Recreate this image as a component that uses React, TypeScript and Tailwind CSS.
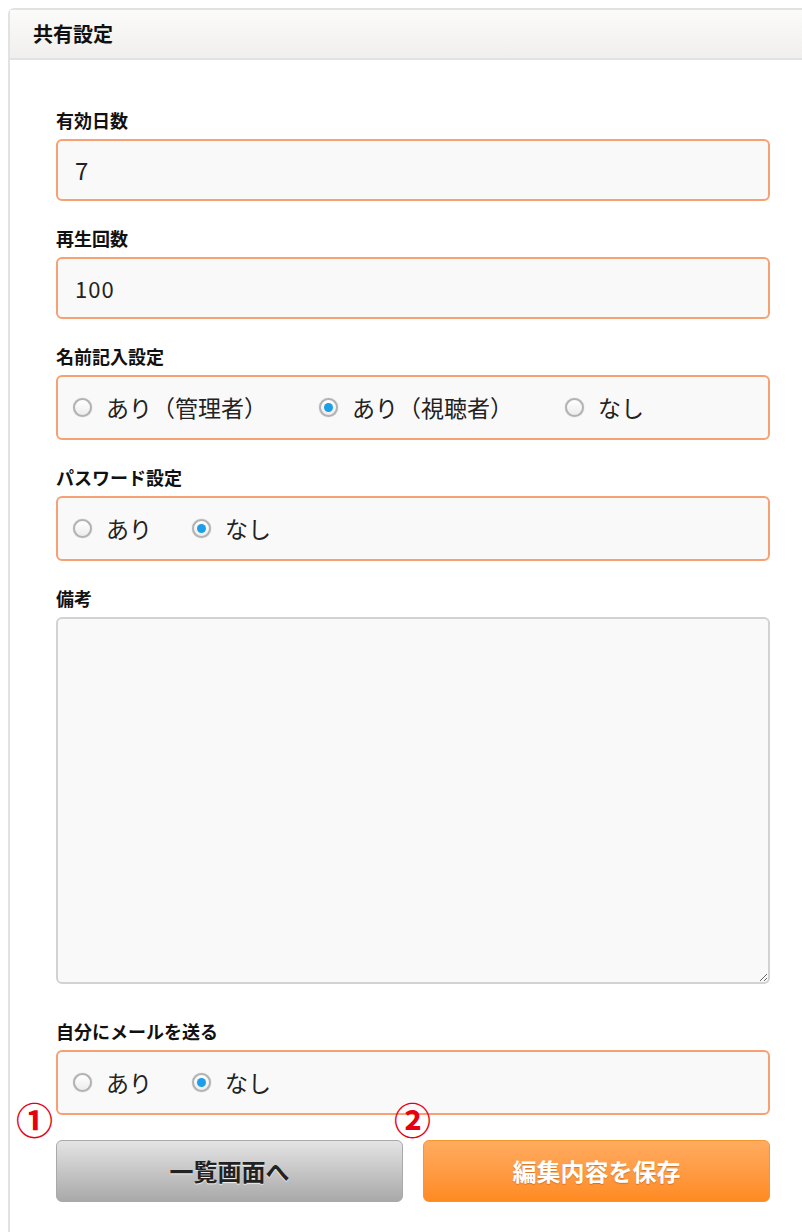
import React from "react";

function Radio({ checked }: { checked?: boolean }) {
  return (
    <span className="relative inline-flex w-[19px] h-[19px] min-w-[19px] shrink-0 items-center justify-center rounded-full border-2 border-[#b2b2b2] bg-gradient-to-b from-[#ffffff] to-[#ececec] shadow-[0_0_1px_rgba(0,0,0,0.35)]">
      {checked && <span className="w-[9px] h-[9px] rounded-full bg-[#1d9ee9]" />}
    </span>
  );
}

function Option({ label, checked, className }: { label: string; checked?: boolean; className?: string }) {
  return (
    <span className={"inline-flex items-center gap-[14px] " + (className ?? "")}>
      <Radio checked={checked} />
      <span className="text-[23px] text-[#222]">{label}</span>
    </span>
  );
}

function Label({ children }: { children: React.ReactNode }) {
  return <div className="h-[24px] leading-[24px] mb-[7px] text-[18px] font-bold text-[#111]">{children}</div>;
}

const boxCls =
  "w-[714px] border-2 border-[#f7a072] rounded-[6px] bg-[#f9f9f9] flex items-center";

export default function App() {
  return (
    <div className="relative w-[802px] h-[1232px] overflow-hidden bg-white font-['Noto_Sans_CJK_JP','Noto_Sans',sans-serif]">
      <div className="ml-[8px] mt-[8px] h-[1224px] border-l-2 border-t-2 border-[#e2e2e2] rounded-tl-[6px]">
        <div className="h-[50px] flex items-center pl-[23px] bg-gradient-to-b from-[#fbfbfa] to-[#f0efee] border-b-2 border-[#e2e2e2]">
          <span className="text-[20px] font-bold text-[#111]">共有設定</span>
        </div>
        <div className="pl-[46px] pt-[48px] flex flex-col">
          <div>
            <Label>有効日数</Label>
            <div className={boxCls + " h-[62px] pl-[17px]"}>
              <span className="text-[24px] text-[#222]">7</span>
            </div>
          </div>
          <div className="mt-[25px]">
            <Label>再生回数</Label>
            <div className={boxCls + " h-[62px] pl-[17px]"}>
              <span className="text-[22px] text-[#222] tracking-[1px]">100</span>
            </div>
          </div>
          <div className="mt-[25px]">
            <Label>名前記入設定</Label>
            <div className={boxCls + " h-[65px] pl-[15px]"}>
              <Option label="あり（管理者）" className="mr-[52px]" />
              <Option label="あり（視聴者）" checked className="mr-[52px]" />
              <Option label="なし" />
            </div>
          </div>
          <div className="mt-[25px]">
            <Label>パスワード設定</Label>
            <div className={boxCls + " h-[65px] pl-[15px]"}>
              <Option label="あり" className="mr-[40px]" />
              <Option label="なし" checked />
            </div>
          </div>
          <div className="mt-[25px]">
            <Label>備考</Label>
            <textarea className="block w-[714px] h-[367px] border-2 border-[#d2d2d2] rounded-[6px] bg-[#f9f9f9] outline-none" />
          </div>
          <div className="mt-[35px]">
            <Label>自分にメールを送る</Label>
            <div className={boxCls + " h-[65px] pl-[15px]"}>
              <Option label="あり" className="mr-[40px]" />
              <Option label="なし" checked />
            </div>
          </div>
          <div className="mt-[25px] w-[714px] grid grid-cols-2 gap-[20px]">
            <button className="h-[62px] rounded-[6px] border border-[#a9a9a9] bg-gradient-to-b from-[#e4e4e4] to-[#a9a9a9] text-[24px] font-bold text-[#222] [text-shadow:0_1px_1px_rgba(255,255,255,0.8)]">
              一覧画面へ
            </button>
            <button className="h-[62px] rounded-[6px] border border-[#f7952f] bg-gradient-to-b from-[#ffac5f] to-[#ff8a1f] text-[24px] font-bold text-white [text-shadow:0_1px_1px_rgba(120,60,0,0.35)]">
              編集内容を保存
            </button>
          </div>
        </div>
      </div>
      <span className="absolute left-[16px] top-[1101px] text-[37px] leading-none font-bold text-[#e60012]">①</span>
      <span className="absolute left-[394px] top-[1101px] text-[37px] leading-none font-bold text-[#e60012]">②</span>
    </div>
  );
}
